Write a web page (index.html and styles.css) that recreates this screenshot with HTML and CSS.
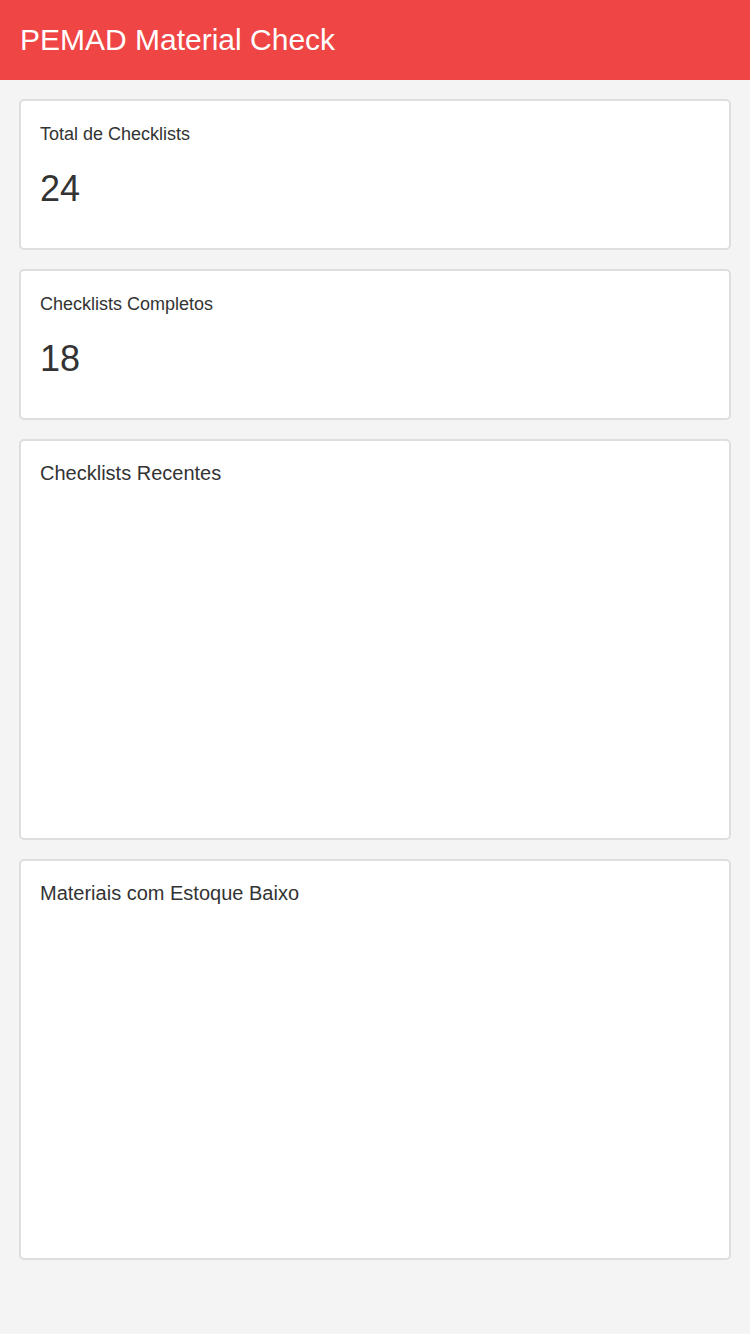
FILE: index.html
```html
<!DOCTYPE html>
<html lang="pt">
<head>
<meta charset="utf-8">
<title>PEMAD Material Check</title>
<link rel="stylesheet" href="styles.css">
</head>
<body>
<header class="topbar">
  <h1 class="topbar-title">PEMAD Material Check</h1>
</header>
<main class="content">
  <section class="card stat-card">
    <div class="stat-label">Total de Checklists</div>
    <div class="stat-value">24</div>
  </section>
  <section class="card stat-card">
    <div class="stat-label">Checklists Completos</div>
    <div class="stat-value">18</div>
  </section>
  <section class="card list-card">
    <h2 class="card-title">Checklists Recentes</h2>
  </section>
  <section class="card list-card">
    <h2 class="card-title">Materiais com Estoque Baixo</h2>
  </section>
</main>
</body>
</html>
```
FILE: styles.css
```css
* { box-sizing: border-box; }
html, body {
  margin: 0;
  padding: 0;
}
body {
  background: #f4f4f4;
  font-family: "Liberation Sans", Arial, sans-serif;
  color: #333;
  min-height: 1334px;
}
.topbar {
  height: 80px;
  background: #ef4545;
  display: flex;
  align-items: center;
  padding-left: 20px;
}
.topbar-title {
  margin: 0;
  font-size: 30px;
  font-weight: normal;
  color: #fff;
  line-height: 1.15;
}
.content {
  display: flex;
  flex-direction: column;
  gap: 19px;
  padding: 19px 19px;
}
.card {
  background: #fff;
  border: 2px solid #dedede;
  border-radius: 5px;
  padding: 20px 19px;
}
.stat-card {
  height: 151px;
}
.stat-label {
  font-size: 18px;
  line-height: 27px;
}
.stat-value {
  margin-top: 14px;
  font-size: 36px;
  line-height: 54px;
}
.list-card {
  height: 401px;
}
.card-title {
  margin: 0;
  font-size: 20px;
  font-weight: normal;
  line-height: 24px;
}
```
